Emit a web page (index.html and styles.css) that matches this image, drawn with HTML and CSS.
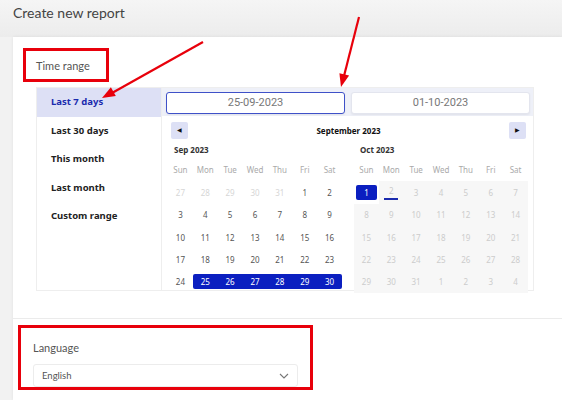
FILE: index.html
```html
<!DOCTYPE html>
<html lang="en">
<head>
    <meta charset="UTF-8">
    <meta name="viewport" content="width=device-width, initial-scale=1.0">
    <title>Create new report</title>
    <link rel="stylesheet" href="styles.css">
</head>
<body>
    <div class="page-head">Create new report</div>

    <div class="card">
        <div class="section time-section">
            <div class="marked label-box">Time range</div>

            <div class="picker">
                <ul class="ranges">
                    <li class="active">Last 7 days</li>
                    <li>Last 30 days</li>
                    <li>This month</li>
                    <li>Last month</li>
                    <li>Custom range</li>
                </ul>

                <div class="cal-panel">
                    <div class="inputs">
                        <div class="date-input focused">25-09-2023</div>
                        <div class="date-input">01-10-2023</div>
                    </div>
                    <div class="nav">
                        <span class="nav-btn">&#9664;</span>
                        <span class="nav-title">September 2023</span>
                        <span class="nav-btn">&#9654;</span>
                    </div>
                    <div class="months">
                        <div class="month" id="sep"></div>
                        <div class="month" id="oct"></div>
                    </div>
                </div>
            </div>
        </div>

        <div class="section lang-section">
            <div class="marked lang-box">
                <div class="lang-label">Language</div>
                <div class="select">
                    <span>English</span>
                    <svg width="10" height="6" viewBox="0 0 10 6"><path d="M1 1l4 4 4-4" fill="none" stroke="#777" stroke-width="1.1"/></svg>
                </div>
            </div>
        </div>
    </div>

    <svg class="arrows" width="562" height="400" viewBox="0 0 562 400">
        <line x1="203" y1="42" x2="112" y2="93" stroke="#e8000b" stroke-width="2.2"/>
        <polygon points="102,98 115.8,96 110.9,87.3" fill="#e8000b"/>
        <line x1="359" y1="17" x2="344" y2="76" stroke="#e8000b" stroke-width="2.2"/>
        <polygon points="341,87 349.1,75.6 339.4,73.2" fill="#e8000b"/>
    </svg>

    <script>
        const dayNames = ['Sun', 'Mon', 'Tue', 'Wed', 'Thu', 'Fri', 'Sat'];

        // each cell: [label, kind]
        function buildMonth(el, title, cells) {
            let html = '<div class="month-title">' + title + '</div><div class="grid">';
            dayNames.forEach(function (d) {
                html += '<div class="dname">' + d + '</div>';
            });
            cells.forEach(function (c) {
                html += '<div class="day ' + (c[1] || '') + '"><span>' + c[0] + '</span></div>';
            });
            el.innerHTML = html + '</div>';
        }

        const sep = [];
        [27, 28, 29, 30, 31].forEach(function (n) { sep.push([n, 'off']); });
        for (let i = 1; i <= 30; i++) {
            let kind = '';
            if (i >= 25) kind = 'sel';
            if (i === 25) kind = 'sel first';
            if (i === 30) kind = 'sel last';
            sep.push([i, kind]);
        }
        buildMonth(document.getElementById('sep'), 'Sep 2023', sep);

        const oct = [[1, 'pick'], [2, 'dis today']];
        for (let i = 3; i <= 31; i++) oct.push([i, 'dis']);
        [1, 2, 3, 4].forEach(function (n) { oct.push([n, 'dis']); });
        buildMonth(document.getElementById('oct'), 'Oct 2023', oct);
    </script>
</body>
</html>
```

FILE: styles.css
```css
/* Global */
body {
    margin: 0;
    background: #f2f2f2;
    font-family: "Noto Sans", "Open Sans", sans-serif;
    color: #333;
    position: relative;
    height: 400px;
    overflow: hidden;
}
.page-head {
    height: 37px;
    box-sizing: border-box;
    padding: 4px 13px 0;
    font-family: Lato, sans-serif;
    font-size: 14px;
    color: #444;
    background: linear-gradient(#f5f5f5, #ececec);
}
.card {
    margin-left: 13px;
    background: #fff;
    box-shadow: 0 0 3px rgba(0, 0, 0, 0.08);
    height: 363px;
}
.marked {
    border: 3px solid #e8000b;
    box-sizing: border-box;
}

/* Time range */
.time-section {
    padding: 11px 0 27px 10px;
    border-bottom: 1px solid #ebebeb;
}
.label-box {
    width: 86px;
    height: 34px;
    padding: 8px 0 0 10px;
    font-family: Lato, sans-serif;
    font-size: 11px;
    color: #555;
}
.picker {
    display: flex;
    width: 498px;
    height: 204px;
    margin: 5px 0 0 13px;
    border: 1px solid #eee;
    box-sizing: border-box;
}
.ranges {
    list-style: none;
    margin: 0;
    padding: 0;
    width: 125px;
    border-right: 1px solid #eee;
}
.ranges li {
    height: 28.5px;
    line-height: 28.5px;
    padding-left: 14px;
    font-size: 9.5px;
    font-weight: bold;
    color: #222;
}
.ranges li.active {
    background: #dde0f5;
    color: #1a2aae;
}

/* Calendar panel */
.cal-panel {
    flex: 1;
}
.inputs {
    display: flex;
    gap: 6px;
    height: 28px;
    padding: 4px 3px 0 4px;
    box-sizing: border-box;
    background: #eef0f8;
}
.date-input {
    flex: 1;
    height: 22px;
    line-height: 20px;
    box-sizing: border-box;
    border: 1px solid #e3e5ee;
    border-radius: 3px;
    background: #fff;
    text-align: center;
    font-family: Roboto, sans-serif;
    font-size: 11px;
    color: #777;
    box-shadow: 0 1px 2px rgba(0, 0, 0, 0.06);
}
.date-input.focused {
    border-color: #3f51c8;
}
.nav {
    display: flex;
    align-items: center;
    justify-content: space-between;
    padding: 6px 7px 0 9px;
}
.nav-btn {
    width: 17px;
    height: 17px;
    line-height: 17px;
    text-align: center;
    font-size: 6px;
    background: #dde0f5;
    border-radius: 2px;
    color: #111;
}
.nav-title {
    font-size: 8px;
    font-weight: bold;
    color: #111;
}
.months {
    display: flex;
    gap: 12px;
    padding: 0 5px 0 6px;
}
.month {
    width: 174px;
}
.month-title {
    height: 20px;
    line-height: 22px;
    padding-left: 6px;
    font-size: 8px;
    font-weight: bold;
    color: #333;
}
.grid {
    display: grid;
    grid-template-columns: repeat(7, 1fr);
    grid-auto-rows: 22.3px;
    font-size: 8px;
    text-align: center;
}
.dname {
    line-height: 22px;
    color: #aaa;
}
.day {
    display: flex;
    align-items: center;
    justify-content: center;
    color: #555;
}
.day span {
    display: block;
    width: 100%;
    height: 15px;
    line-height: 15px;
}
.day.off {
    color: #d6d6d6;
}
.day.sel span {
    background: #0b1fc0;
    color: #fff;
}
.day.first span {
    border-radius: 2px 0 0 2px;
}
.day.last span {
    border-radius: 0 2px 2px 0;
}
.day.dis {
    background: #f7f7f7;
    color: #ccc;
}
.day.pick span {
    width: 21px;
    background: #0b1fc0;
    color: #fff;
    border-radius: 2px;
}
.day.today span {
    width: 14px;
    border-bottom: 2px solid #1a2aae;
    height: 13px;
    line-height: 12px;
}

/* Language */
.lang-section {
    padding: 6px 0 0 5px;
}
.lang-box {
    width: 295px;
    height: 65px;
    padding: 13px 0 0 12px;
}
.lang-label {
    font-family: Lato, sans-serif;
    font-size: 11px;
    color: #555;
}
.select {
    display: flex;
    align-items: center;
    justify-content: space-between;
    width: 265px;
    height: 23px;
    margin-top: 10px;
    padding: 0 8px;
    box-sizing: border-box;
    border: 1px solid #ececec;
    border-radius: 3px;
    font-family: Lato, sans-serif;
    font-size: 9.5px;
    color: #555;
}

/* Annotation arrows */
.arrows {
    position: absolute;
    top: 0;
    left: 0;
    pointer-events: none;
}
```
